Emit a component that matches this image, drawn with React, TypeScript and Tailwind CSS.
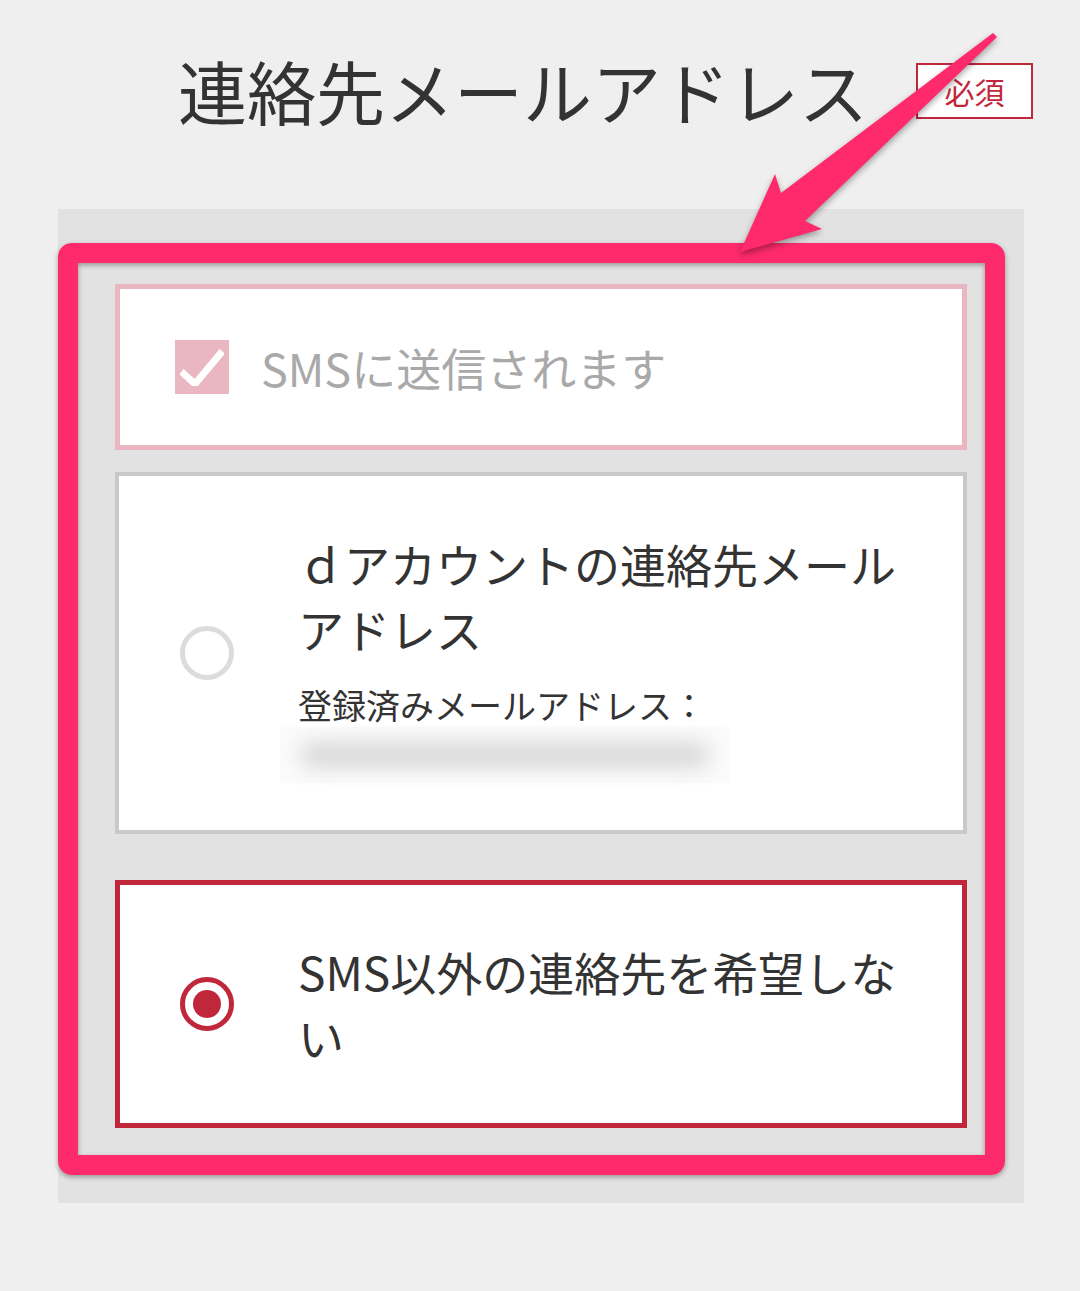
import React from "react";

const FONT = { fontFamily: '"Noto Sans CJK JP", "Noto Sans", sans-serif' };

// 注釈の矢印（スクリーンショット上に描かれたもの）
function Arrow() {
  return (
    <svg
      className="pointer-events-none absolute left-0 top-0"
      width={1080}
      height={1291}
      viewBox="0 0 1080 1291"
      style={{ filter: "drop-shadow(0 3px 3px rgba(0,0,0,0.35))" }}
    >
      <polygon
        points="740,252 775,174 781,193 993,33 997,37 805,221 822,229"
        fill="#fe2a6b"
      />
    </svg>
  );
}

function Radio({ checked }: { checked: boolean }) {
  if (!checked) {
    return <span className="block size-[54px] shrink-0 rounded-full border-[5px] border-[#dcdcdc] bg-white" />;
  }
  return (
    <span className="grid size-[54px] shrink-0 place-items-center rounded-full border-[5px] border-[#c1273b] bg-white">
      <span className="block size-[28px] rounded-full bg-[#c1273b]" />
    </span>
  );
}

export default function App() {
  return (
    <div className="relative h-[1291px] w-[1080px] overflow-hidden bg-[#efefef] text-[#333]" style={FONT}>
      {/* 見出し */}
      <div className="flex h-[209px] items-start pl-[178px] pt-[42px]">
        <h1 className="text-[69px] font-normal leading-[96px]">連絡先メールアドレス</h1>
        <span className="ml-[48px] mt-[21px] flex h-[56px] w-[117px] items-center justify-center border-2 border-[#c1273b] bg-white text-[30px] leading-none text-[#c1273b]">
          必須
        </span>
      </div>

      {/* 選択肢 */}
      <div className="relative ml-[58px] w-[966px] bg-[#e2e2e2] px-[57px] pb-[75px] pt-[75px]">
        <div className="flex h-[166px] items-center border-[5px] border-[#e9b6c2] bg-white pl-[55px]">
          <span className="grid size-[54px] shrink-0 place-items-center bg-[#e9b6c2]">
            <svg width="44" height="38" viewBox="0 0 44 38">
              <path d="M4 26 L15 36 L40 6" fill="none" stroke="#fff" strokeWidth="7" strokeLinecap="square" />
            </svg>
          </span>
          <span className="ml-[32px] text-[45px] leading-none text-[#a9a9a9]">SMSに送信されます</span>
        </div>

        <div className="mt-[22px] flex h-[362px] items-center border-4 border-[#c9c9c9] bg-white pl-[61px]">
          <Radio checked={false} />
          <div className="ml-[64px] mt-[8px] w-[620px]">
            <p className="text-[46px] leading-[65px]">ｄアカウントの連絡先メールアドレス</p>
            <p className="mt-[22px] text-[34px] leading-[44px]">登録済みメールアドレス：</p>
            <div className="-ml-[18px] flex h-[56px] w-[450px] items-center bg-[#fbfbfb] px-[20px]">
              <div className="h-[26px] w-full rounded-full bg-[#d9d9d9] blur-[10px]" />
            </div>
          </div>
        </div>

        <div className="mt-[46px] flex h-[248px] items-center border-[5px] border-[#c1273b] bg-white pl-[60px]">
          <Radio checked />
          <p className="ml-[64px] w-[620px] text-[46px] leading-[65px]">SMS以外の連絡先を希望しない</p>
        </div>

        {/* 注釈の枠 */}
        <div className="pointer-events-none absolute left-0 top-[34px] h-[932px] w-[947px] rounded-[14px] border-[20px] border-[#fe2a6b] shadow-[0_2px_5px_rgba(0,0,0,0.35),inset_0_2px_5px_rgba(0,0,0,0.35)]" />
      </div>

      <Arrow />
    </div>
  );
}
